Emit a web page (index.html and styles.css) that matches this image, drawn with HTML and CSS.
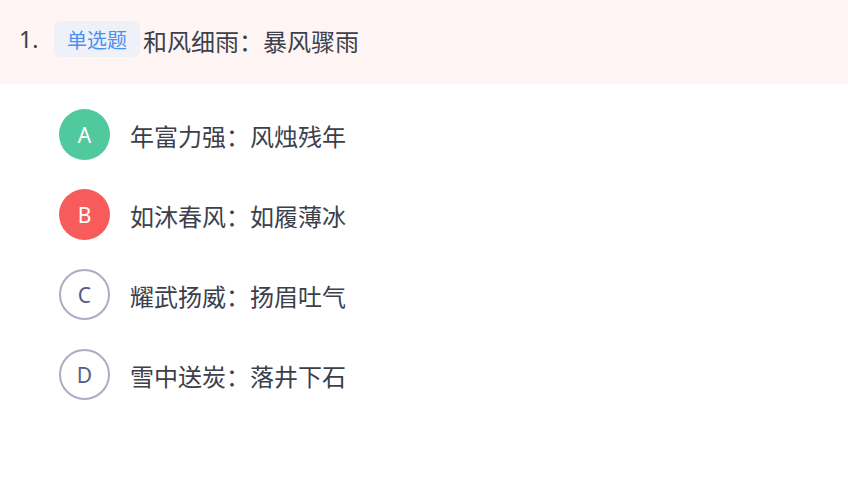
FILE: index.html
```html
<!DOCTYPE html>
<html lang="zh-CN">
<head>
<meta charset="utf-8">
<link rel="stylesheet" href="styles.css">
</head>
<body>
<div class="question">
  <span class="num">1.</span>
  <span class="badge">单选题</span>
  <span class="title">和风细雨：暴风骤雨</span>
</div>
<ul class="options">
  <li class="option"><span class="mark mark-a">A</span><span class="text">年富力强：风烛残年</span></li>
  <li class="option"><span class="mark mark-b">B</span><span class="text">如沐春风：如履薄冰</span></li>
  <li class="option"><span class="mark mark-plain">C</span><span class="text">耀武扬威：扬眉吐气</span></li>
  <li class="option"><span class="mark mark-plain">D</span><span class="text">雪中送炭：落井下石</span></li>
</ul>
</body>
</html>
```

FILE: styles.css
```css
html, body {
  margin: 0;
  padding: 0;
  background: #ffffff;
  font-family: "Noto Sans", "Noto Sans CJK SC", sans-serif;
  color: #3b404b;
}
.question {
  display: flex;
  align-items: center;
  height: 84px;
  box-sizing: border-box;
  padding: 21px 0 27px 19px;
  background: #fff5f5;
}
.num {
  font-size: 23px;
  line-height: 36px;
  width: 35px;
}
.badge {
  display: inline-flex;
  align-items: center;
  height: 36px;
  padding: 0 13px;
  border-radius: 6px;
  background: #eff1f8;
  color: #4a90f2;
  font-family: "Noto Sans CJK SC", sans-serif;
  font-size: 20px;
}
.title {
  margin-left: 3px;
  font-family: "Noto Sans CJK SC", sans-serif;
  font-size: 24px;
  line-height: 36px;
  position: relative;
  top: 2px;
}
.options {
  list-style: none;
  margin: 0;
  padding: 25px 0 0 59px;
  display: flex;
  flex-direction: column;
  gap: 29px;
}
.option {
  display: flex;
  align-items: center;
  height: 51px;
}
.mark {
  width: 51px;
  height: 51px;
  box-sizing: border-box;
  border-radius: 50%;
  display: flex;
  align-items: center;
  justify-content: center;
  font-family: "Noto Sans", sans-serif;
  font-weight: 400;
  font-size: 21px;
  color: #ffffff;
}
.mark-a { background: #50c99e; }
.mark-b { background: #f75b5b; }
.mark-plain {
  border: 2px solid #a9adc5;
  color: #575e83;
  background: #ffffff;
}
.text {
  margin-left: 20px;
  font-family: "Noto Sans CJK SC", sans-serif;
  font-size: 24px;
  line-height: 36px;
  position: relative;
  top: 1px;
}
```
